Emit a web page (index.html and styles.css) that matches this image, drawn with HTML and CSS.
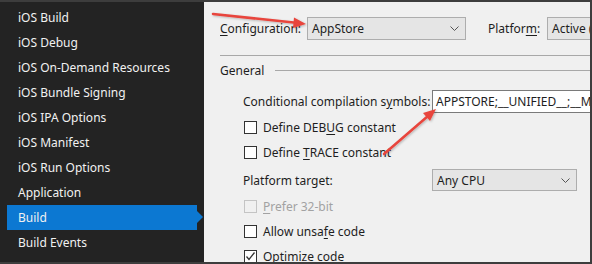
FILE: index.html
```html
<!DOCTYPE html>
<html>

<head>
    <title>Project Options - Build</title>
    <link rel="stylesheet" href="styles.css">
</head>

<body>
    <div class="window">
        <ul class="sidebar">
            <li>iOS Build</li>
            <li>iOS Debug</li>
            <li>iOS On-Demand Resources</li>
            <li>iOS Bundle Signing</li>
            <li>iOS IPA Options</li>
            <li>iOS Manifest</li>
            <li>iOS Run Options</li>
            <li>Application</li>
            <li class="selected">Build</li>
            <li>Build Events</li>
        </ul>

        <div class="main">
            <div class="config-row">
                <span class="config-label"><u>C</u>onfiguration:</span>
                <div class="select config-select">
                    <span>AppStore</span>
                    <svg class="chevron" width="9" height="5" viewBox="0 0 9 5"><polyline points="0.5,0.5 4.5,4.5 8.5,0.5" fill="none" stroke="#555" stroke-width="1" /></svg>
                </div>
                <span class="platform-label">Platfor<u>m</u>:</span>
                <div class="select platform-select"><span>Active (iPhone)</span></div>
            </div>

            <div class="section-title">
                <span>General</span>
                <div class="rule"></div>
            </div>

            <div class="section">
                <div class="row symbols-row">
                    <span class="field-label">Conditional compilation s<u>y</u>mbols:</span>
                    <div class="text-input">APPSTORE;__UNIFIED__;__MOBILE__;__IOS__</div>
                </div>
                <div class="row check-row">
                    <span class="checkbox"></span>
                    <span>Define DEB<u>U</u>G constant</span>
                </div>
                <div class="row check-row">
                    <span class="checkbox"></span>
                    <span>Define <u>T</u>RACE constant</span>
                </div>
                <div class="row target-row">
                    <span class="field-label">Platform target:</span>
                    <div class="select target-select">
                        <span>Any CPU</span>
                        <svg class="chevron" width="9" height="5" viewBox="0 0 9 5"><polyline points="0.5,0.5 4.5,4.5 8.5,0.5" fill="none" stroke="#555" stroke-width="1" /></svg>
                    </div>
                </div>
                <div class="row check-row disabled">
                    <span class="checkbox"></span>
                    <span><u>P</u>refer 32-bit</span>
                </div>
                <div class="row check-row">
                    <span class="checkbox"></span>
                    <span>Allow unsa<u>f</u>e code</span>
                </div>
                <div class="row check-row">
                    <span class="checkbox">
                        <svg width="11" height="11" viewBox="0 0 11 11"><polyline points="1.5,5.5 4,8.5 9.5,1.5" fill="none" stroke="#333" stroke-width="1.3" /></svg>
                    </span>
                    <span>Optimi<u>z</u>e code</span>
                </div>
            </div>
        </div>

        <!-- annotation arrows drawn over the screenshot -->
        <svg class="arrows" width="592" height="264" viewBox="0 0 592 264">
            <defs>
                <filter id="shadow" x="-10%" y="-10%" width="120%" height="120%">
                    <feDropShadow dx="1" dy="1" stdDeviation="1" flood-color="#000" flood-opacity="0.25" />
                </filter>
            </defs>
            <g filter="url(#shadow)" fill="#e8453c" stroke="#e8453c">
                <line x1="213" y1="14" x2="296" y2="22.8" stroke-width="2.5" stroke-linecap="round" />
                <polygon points="306,24 294,17.5 293,28" stroke="none" />
                <line x1="384" y1="154" x2="428" y2="116" stroke-width="2.5" stroke-linecap="round" />
                <polygon points="436,109 423,113 430,121" stroke="none" />
            </g>
        </svg>
    </div>
</body>

</html>
```

FILE: styles.css
```css
body {
    margin: 0;
    background: #3d3d3d;
    font-family: "Noto Sans", "Open Sans", sans-serif;
    font-size: 12px;
}

u {
    text-decoration-thickness: 1px;
    text-underline-offset: 2px;
}

.window {
    position: relative;
    display: flex;
    width: 592px;
    height: 264px;
    box-sizing: border-box;
    border: 2px solid #3d3d3d;
    border-left: none;
    overflow: hidden;
}

.sidebar {
    list-style-type: none;
    margin: 0;
    padding: 3px 0 0 0;
    width: 204px;
    flex-shrink: 0;
    background: #232323;
    color: #f1f1f1;
}

.sidebar>li {
    position: relative;
    height: 25px;
    line-height: 25px;
    padding-left: 18px;
    white-space: nowrap;
}

.sidebar>li.selected {
    background: #0c78d2;
    margin-left: 7px;
    margin-right: 7px;
    padding-left: 11px;
}

.sidebar>li.selected::after {
    content: "";
    position: absolute;
    right: -6px;
    top: 6px;
    border-top: 6px solid transparent;
    border-bottom: 6px solid transparent;
    border-left: 6px solid #0c78d2;
}

.main {
    flex: 1;
    background: #f0f0f0;
    color: #1e1e1e;
    padding: 15px 0 0 16px;
    overflow: hidden;
    white-space: nowrap;
}

.config-row {
    display: flex;
    align-items: center;
    height: 23px;
    padding-bottom: 15px;
    border-bottom: 1px solid #a8a8a8;
}

.config-label {
    width: 87px;
    flex-shrink: 0;
}

.platform-label {
    margin-left: 22px;
    width: 59px;
    flex-shrink: 0;
}

.select {
    position: relative;
    display: flex;
    align-items: center;
    height: 23px;
    box-sizing: border-box;
    padding-left: 4px;
    background: #e5e5e5;
    border: 1px solid #adadad;
    flex-shrink: 0;
}

.config-select {
    width: 159px;
}

.platform-select {
    width: 120px;
}

.target-select {
    width: 145px;
    height: 22px;
}

.chevron {
    position: absolute;
    right: 6px;
    top: 8px;
}

.section-title {
    display: flex;
    align-items: center;
    height: 16px;
    margin-top: 6px;
}

.section-title .rule {
    flex: 1;
    height: 1px;
    background: #a8a8a8;
    margin-left: 11px;
}

.section {
    padding-left: 23px;
    padding-top: 12px;
}

.row {
    display: flex;
    align-items: center;
}

.field-label {
    width: 189px;
    flex-shrink: 0;
}

.symbols-row {
    height: 23px;
    margin-bottom: 2px;
}

.text-input {
    height: 23px;
    box-sizing: border-box;
    padding: 2px 0 0 3px;
    background: #fff;
    border: 1px solid #7a7a7a;
    line-height: 18px;
}

.check-row {
    height: 25px;
}

.checkbox {
    display: inline-flex;
    align-items: center;
    justify-content: center;
    width: 13px;
    height: 13px;
    box-sizing: border-box;
    margin-left: 1px;
    margin-right: 6px;
    background: #fff;
    border: 1px solid #333;
}

.check-row.disabled {
    color: #a2a2a2;
}

.check-row.disabled .checkbox {
    border-color: #c4c4c4;
    background: #f0f0f0;
}

.target-row {
    height: 22px;
    margin-top: 4px;
    margin-bottom: 3px;
}

.arrows {
    position: absolute;
    left: 0;
    top: -2px;
    pointer-events: none;
}
```
